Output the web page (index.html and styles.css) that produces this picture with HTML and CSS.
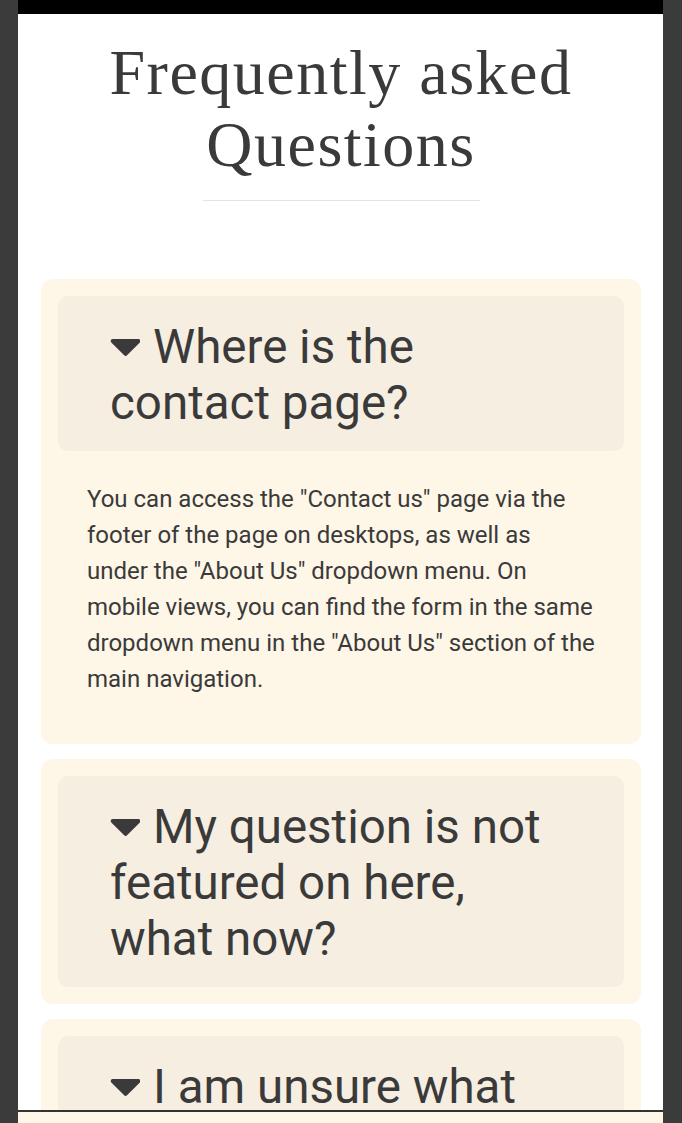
FILE: index.html
```html
<!DOCTYPE html>
<html lang="en">
<head>
<meta charset="utf-8">
<title>Frequently asked Questions</title>
<link rel="stylesheet" href="styles.css">
</head>
<body>
<div class="page">
  <div class="topbar"></div>
  <main class="faq">
    <h1 class="faq-title">Frequently asked Questions</h1>
    <hr class="faq-divider">
    <div class="faq-list">
      <details class="faq-item" open>
        <summary class="faq-question"><svg class="caret" viewBox="4 192 300 169" width="30" height="17" aria-hidden="true"><path d="M31.3 192h257.3c17.8 0 26.7 21.5 14.1 34.1L174.1 354.8c-7.8 7.8-20.5 7.8-28.3 0L17.2 226.1C4.6 213.5 13.5 192 31.3 192z"/></svg>Where is the contact page?</summary>
        <p class="faq-answer">You can access the "Contact us" page via the footer of the page on desktops, as well as under the "About Us" dropdown menu. On mobile views, you can find the form in the same dropdown menu in the "About Us" section of the main navigation.</p>
      </details>
      <details class="faq-item">
        <summary class="faq-question"><svg class="caret" viewBox="4 192 300 169" width="30" height="17" aria-hidden="true"><path d="M31.3 192h257.3c17.8 0 26.7 21.5 14.1 34.1L174.1 354.8c-7.8 7.8-20.5 7.8-28.3 0L17.2 226.1C4.6 213.5 13.5 192 31.3 192z"/></svg>My question is not featured on here, what now?</summary>
        <p class="faq-answer">Please get in touch with us through the "Contact us" form and we will get back to you as soon as possible.</p>
      </details>
      <details class="faq-item">
        <summary class="faq-question"><svg class="caret" viewBox="4 192 300 169" width="30" height="17" aria-hidden="true"><path d="M31.3 192h257.3c17.8 0 26.7 21.5 14.1 34.1L174.1 354.8c-7.8 7.8-20.5 7.8-28.3 0L17.2 226.1C4.6 213.5 13.5 192 31.3 192z"/></svg>I am unsure what product is right for me?</summary>
        <p class="faq-answer">Our team is happy to help you choose. Send us a message and tell us what you are looking for.</p>
      </details>
    </div>
  </main>
  <div class="bottom-bar"></div>
</div>
</body>
</html>
```
FILE: styles.css
```css
html, body {
  margin: 0;
  padding: 0;
}

body {
  background: #3b3b3b;
  font-family: Roboto, "Liberation Sans", Arial, sans-serif;
  color: #3a3a3a;
}

.page {
  width: 645px;
  margin: 0 auto 0 18px;
  background: #ffffff;
  min-height: 1123px;
}

.topbar {
  height: 14px;
  background: #000000;
}

.faq {
  padding: 0 22px 40px 23px;
}

.faq-title {
  margin: 23px 0 0;
  font-family: "Liberation Serif", "Times New Roman", serif;
  font-weight: 400;
  font-size: 64px;
  line-height: 72px;
  letter-spacing: 1.5px;
  text-align: center;
  color: #3a3a3a;
}

.faq-divider {
  width: 277px;
  margin: 19px auto 0;
  border: 0;
  border-top: 1px solid #e4e4e4;
  height: 0;
}

.faq-list {
  margin-top: 78px;
  display: flex;
  flex-direction: column;
  gap: 15px;
}

.faq-item {
  background: #fef6e7;
  border-radius: 12px;
  padding: 17px;
}

.faq-question {
  list-style: none;
  display: block;
  background: #f6eee0;
  border-radius: 10px;
  padding: 23px 52px 20px 52px;
  font-size: 47.5px;
  line-height: 56px;
  font-weight: 400;
  color: #3a3a3a;
  cursor: pointer;
}

.faq-question::-webkit-details-marker {
  display: none;
}

.caret {
  fill: #3a3a3a;
  vertical-align: 7px;
  margin-right: 13px;
}

.faq-answer {
  margin: 0;
  padding: 30px 28px 30px 29px;
  font-size: 24px;
  line-height: 36px;
  color: #3a3a3a;
}

.bottom-bar {
  position: fixed;
  left: 18px;
  bottom: 0;
  width: 645px;
  height: 11px;
  background: #fef6e7;
  border-top: 2px solid #333333;
}
```
